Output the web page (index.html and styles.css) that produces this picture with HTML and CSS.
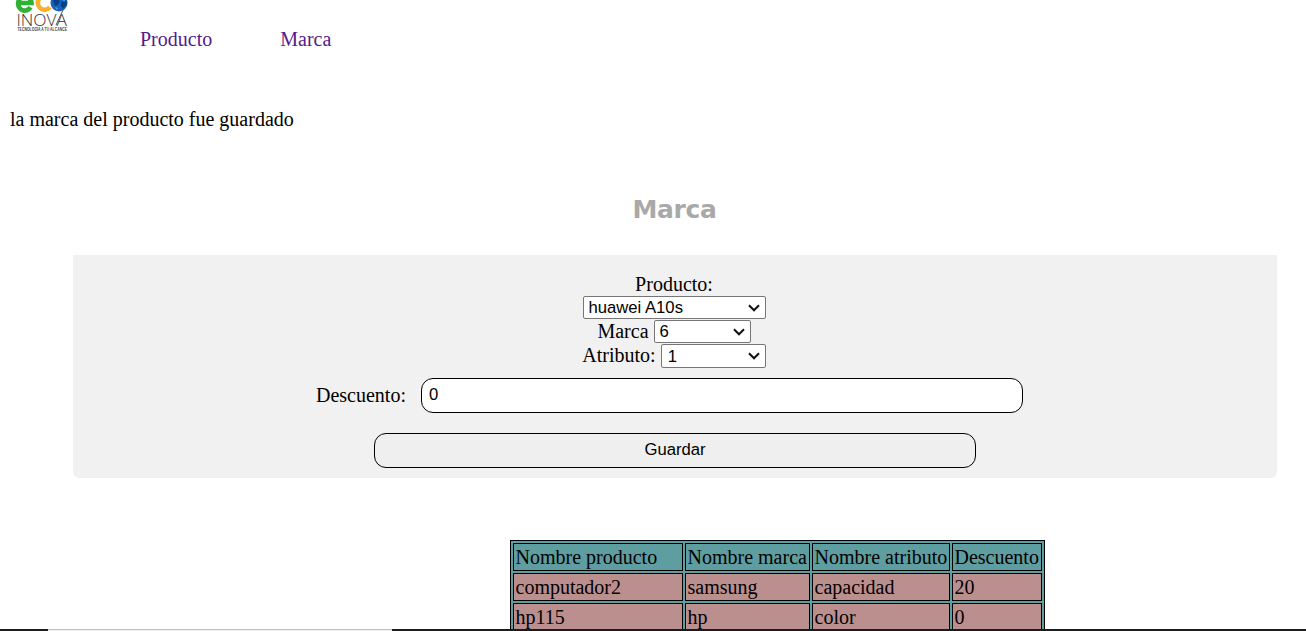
FILE: index.html
```
<!DOCTYPE html>
<html lang="es">
<head>
<meta charset="utf-8">
<title>Marca</title>
<link rel="stylesheet" href="styles.css">
</head>
<body>
<header class="header">
  <svg class="logo" viewBox="0 0 60 38" width="60" height="38">
    <g fill="none" stroke-width="4.6">
      <path d="M6 3H19.500A6.700 7 0 1 0 18.500 7.300" stroke="#2eb135"/>
      <path d="M37.800 -1.500A6.700 7 0 1 0 37.800 7.100" stroke="#fbb02d"/>
    </g>
    <circle cx="47" cy="3" r="8.500" fill="#1763b8"/>
    <path d="M41 0l4-2 3 3-2 4-3 1zM49 2l5-2 1 4-4 5-2-3z" fill="#0a3e88"/>
    <path d="M50 -2l4 1-2 3zM43 7l3 1-1 2z" fill="#4aa3df"/>
    <text class="logo-name" x="4.500" y="25.500" textLength="50.500" lengthAdjust="spacingAndGlyphs">INOVA</text>
    <path d="M44 25L52 8" stroke="#555" stroke-width="1"/>
    <text class="logo-tag" x="5.500" y="31.300" textLength="49.500" lengthAdjust="spacingAndGlyphs">TECNOLOGIA A TU ALCANCE</text>
  </svg>
  <nav class="nav">
    <a class="nav-link" href="#">Producto</a>
    <a class="nav-link" href="#">Marca</a>
  </nav>
</header>
<p class="message">la marca del producto fue guardado</p>
<h1 class="title">Marca</h1>
<form class="form">
  <div class="row">Producto:</div>
  <div class="row"><span class="select select-product">huawei A10s<svg class="arrow" viewBox="0 0 12 8"><path d="M1 1.300L6 6.300L11 1.300"/></svg></span></div>
  <div class="row"><span class="label">Marca</span><span class="select select-brand">6<svg class="arrow" viewBox="0 0 12 8"><path d="M1 1.300L6 6.300L11 1.300"/></svg></span></div>
  <div class="row"><span class="label">Atributo:</span><span class="select select-attribute">1<svg class="arrow" viewBox="0 0 12 8"><path d="M1 1.300L6 6.300L11 1.300"/></svg></span></div>
  <div class="discount"><label for="discount">Descuento:</label><input class="field" id="discount" type="text" value="0"></div>
  <button class="save" type="button">Guardar</button>
</form>
<table class="table">
  <colgroup><col class="c1"><col class="c2"><col class="c3"><col class="c4"></colgroup>
  <tr class="head"><td>Nombre producto</td><td>Nombre marca</td><td>Nombre atributo</td><td>Descuento</td></tr>
  <tr><td>computador2</td><td>samsung</td><td>capacidad</td><td>20</td></tr>
  <tr><td>hp115</td><td>hp</td><td>color</td><td>0</td></tr>
</table>
<div class="taskbar"><div class="search"></div></div>
</body>
</html>
```
FILE: styles.css
```
* { box-sizing: border-box; }
body {
  margin: 0;
  height: 631px;
  overflow: hidden;
  background: #fff;
  color: #000;
  font: 20px/24px "Liberation Serif", "Times New Roman", serif;
}
.header { display: flex; height: 107px; padding-left: 12px; }
.logo { display: block; }
.logo-name { font: 300 16.5px "Open Sans", sans-serif; fill: #333; }
.logo-tag { font: bold 4.5px "Liberation Sans", sans-serif; fill: #444; }
.nav { display: flex; gap: 68px; padding: 27px 0 0 68px; }
.nav-link { color: #551a8b; text-decoration: none; }
.message { margin: 0 0 0 10px; height: 86px; }
.title {
  margin: 0 0 0 43px;
  height: 62px;
  color: #a9a9a9;
  text-align: center;
  font: bold 25px/34px "DejaVu Sans", Verdana, sans-serif;
  letter-spacing: -0.4px;
}
.form {
  width: 1204px;
  height: 223px;
  margin-left: 73px;
  padding-top: 17px;
  border-radius: 0 0 6px 6px;
  background: #f1f1f1;
}
.row { display: flex; justify-content: center; gap: 5px; height: 24px; padding-right: 2px; }
.label { line-height: 22px; }
.select {
  display: flex;
  align-items: center;
  justify-content: space-between;
  height: 23px;
  padding: 0 5px;
  border: 1px solid #767676;
  border-radius: 2px;
  background: #fff;
  font: 16.67px/21px "Liberation Sans", Arial, sans-serif;
}
.select-product { width: 183px; }
.select-brand { width: 97px; }
.select-attribute { width: 105px; height: 24px; padding-left: 6px; }
.arrow { width: 12px; height: 8px; fill: none; stroke: #111; stroke-width: 2; }
.discount { display: flex; gap: 15px; margin: 10px 0 0 243px; line-height: 34px; }
.field, .save {
  width: 602px;
  height: 35px;
  border: 1px solid #000;
  border-radius: 12px;
  font: 16.67px "Liberation Sans", Arial, sans-serif;
  color: #000;
}
.field { padding: 0 7px 2px; background: #fff; }
.save { display: block; margin: 20px 0 0 301px; padding: 0 0 2px; background: #efefef; }
.table {
  table-layout: fixed;
  width: 535px;
  margin: 62px 0 0 510px;
  border: 1px solid #000;
  border-spacing: 2px;
  background: #5f9ea0;
}
.table td {
  height: 28px;
  padding: 1px 1px 1px 1.5px;
  border: 1px solid #000;
  background: #bc8f8f;
  white-space: nowrap;
}
.table .head td { background: #5f9ea0; }
.c1 { width: 170px; }
.c2 { width: 125px; }
.c3 { width: 138px; }
.c4 { width: 90px; }
.taskbar { position: absolute; left: 0; right: 0; bottom: 0; height: 2px; background: #1c1c1c; }
.search { width: 344px; height: 2px; margin-left: 48px; border-top: 1px solid #bfbfbf; background: #f0f0f0; }
```
